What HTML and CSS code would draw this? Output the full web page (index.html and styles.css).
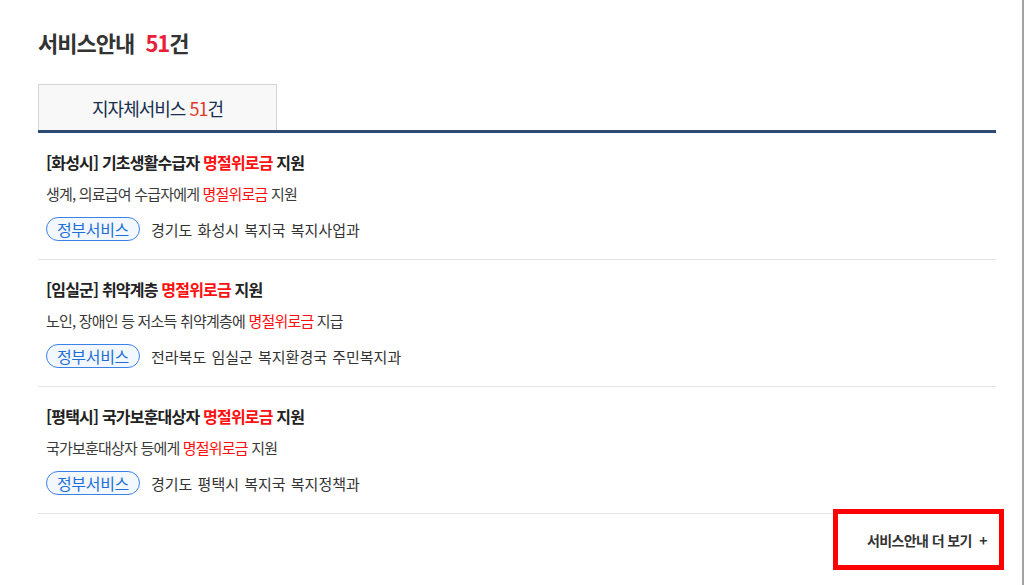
FILE: index.html
```html
<!DOCTYPE html>
<html lang="ko">
<head>
  <meta charset="UTF-8" />
  <meta name="viewport" content="width=device-width, initial-scale=1.0" />
  <title>서비스안내</title>
  <link rel="stylesheet" href="styles.css">
</head>
<body>
  <div class="page">
    <h2 class="title">서비스안내 <span class="count">51</span>건</h2>

    <div class="tabs">
      <div class="tab active">지자체서비스 <span class="count">51</span>건</div>
    </div>

    <ul class="list">
      <li class="item">
        <div class="item-title">[화성시] 기초생활수급자 <em>명절위로금</em> 지원</div>
        <div class="item-desc">생계, 의료급여 수급자에게 <em>명절위로금</em> 지원</div>
        <div class="item-meta">
          <span class="badge">정부서비스</span>
          <span class="dept">경기도 화성시 복지국 복지사업과</span>
        </div>
      </li>
      <li class="item">
        <div class="item-title">[임실군] 취약계층 <em>명절위로금</em> 지원</div>
        <div class="item-desc">노인, 장애인 등 저소득 취약계층에 <em>명절위로금</em> 지급</div>
        <div class="item-meta">
          <span class="badge">정부서비스</span>
          <span class="dept">전라북도 임실군 복지환경국 주민복지과</span>
        </div>
      </li>
      <li class="item">
        <div class="item-title">[평택시] 국가보훈대상자 <em>명절위로금</em> 지원</div>
        <div class="item-desc">국가보훈대상자 등에게 <em>명절위로금</em> 지원</div>
        <div class="item-meta">
          <span class="badge">정부서비스</span>
          <span class="dept">경기도 평택시 복지국 복지정책과</span>
        </div>
      </li>
    </ul>

    <div class="more-row">
      <a class="more" href="#">서비스안내 더 보기 <span class="plus">+</span></a>
    </div>
  </div>
</body>
</html>
```

FILE: styles.css
```css
html, body {
  margin: 0;
  padding: 0;
  background: #fff;
}
body {
  font-family: "Noto Sans CJK KR", "Noto Sans", sans-serif;
  color: #333;
}
.page {
  min-height: 100vh;
  box-sizing: border-box;
  border-right: 2px solid #a3a3a3;
  padding: 27px 26px 0 38px;
}
.title {
  margin: 0;
  font-size: 22px;
  line-height: 30px;
  font-weight: bold;
  letter-spacing: -1px;
  color: #333;
  word-spacing: 6px;
}
.title .count {
  color: #e8203a;
}
.tabs {
  display: flex;
  margin-top: 27px;
  border-bottom: 3px solid #2d4a74;
}
.tab {
  width: 239px;
  height: 46px;
  box-sizing: border-box;
  border: 1px solid #d4d4d4;
  border-bottom: none;
  background: #f8f8f8;
  display: flex;
  align-items: center;
  justify-content: center;
  font-size: 18px;
  letter-spacing: -1px;
  color: #172f4f;
  padding-top: 1px;
}
.tab .count {
  color: #e03a2e;
  margin-left: 4px;
}
.list {
  list-style: none;
  margin: 0;
  padding: 0;
}
.item {
  padding: 17px 8px 18px;
  border-bottom: 1px solid #e3e3e3;
}
.item em {
  font-style: normal;
  color: #ff1010;
}
.item-title {
  font-size: 16px;
  line-height: 24px;
  font-weight: bold;
  letter-spacing: -0.8px;
  color: #222;
}
.item-desc {
  margin-top: 8px;
  font-size: 15px;
  line-height: 24px;
  letter-spacing: -0.8px;
  color: #3a3a3a;
}
.item-meta {
  margin-top: 11px;
  display: flex;
  align-items: center;
  height: 24px;
}
.badge {
  display: inline-flex;
  align-items: center;
  justify-content: center;
  width: 94px;
  height: 24px;
  box-sizing: border-box;
  border: 1px solid #3b82e6;
  border-radius: 12px;
  background: #f3f8ff;
  color: #1d6fd6;
  font-size: 16px;
  letter-spacing: -0.3px;
}
.dept {
  margin-left: 11px;
  font-size: 15px;
  word-spacing: 1px;
  color: #333;
}
.more-row {
  display: flex;
  justify-content: flex-end;
  margin-top: -5px;
  margin-right: -8px;
}
.more {
  display: flex;
  align-items: center;
  width: 171px;
  height: 61px;
  box-sizing: border-box;
  border: 5px solid #ff0000;
  padding: 0 12px 0 29px;
  font-size: 14px;
  font-weight: bold;
  letter-spacing: -0.6px;
  color: #333;
  text-decoration: none;
}
.more .plus {
  margin-left: auto;
  font-weight: bold;
}
```
